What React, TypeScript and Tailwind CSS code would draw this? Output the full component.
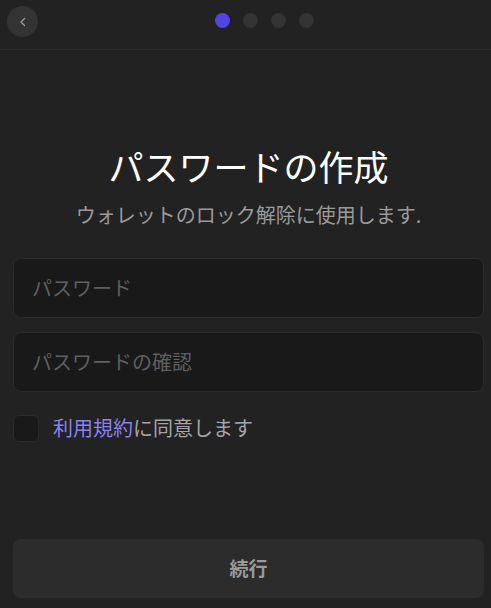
import React from "react";

export default function App() {
  return (
    <div
      className="w-[491px] h-[608px] bg-[#222222] flex flex-col overflow-hidden"
      style={{ fontFamily: '"Noto Sans CJK JP", "Noto Sans", sans-serif' }}
    >
      <header className="h-[50px] shrink-0 relative flex items-center justify-center border-b border-[#2c2c2c]">
        <button className="absolute left-[7px] top-[6px] w-[31px] h-[31px] rounded-full bg-[#333333] flex items-center justify-center text-[#9a9a9a]">
          <svg width="12" height="12" viewBox="0 0 24 24" fill="none" stroke="currentColor" strokeWidth="2.5" strokeLinecap="round" strokeLinejoin="round">
            <path d="M15 5l-7 7 7 7" />
          </svg>
        </button>
        <div className="flex items-center gap-[13px] -mt-[8px] ml-[37px]">
          <span className="w-[15px] h-[15px] rounded-full bg-[#5046e4]" />
          <span className="w-[15px] h-[15px] rounded-full bg-[#333333]" />
          <span className="w-[15px] h-[15px] rounded-full bg-[#333333]" />
          <span className="w-[15px] h-[15px] rounded-full bg-[#333333]" />
        </div>
      </header>

      <main className="flex-1 flex flex-col pl-[13px] pr-[7px]">
        <h1 className="mt-[94px] text-center text-[35px] leading-[44px] text-white">パスワードの作成</h1>
        <p className="mt-[13px] text-center text-[20px] leading-[28px] text-[#9a9a9a]">
          ウォレットのロック解除に使用します.
        </p>

        <div className="mt-[29px] h-[60px] rounded-[8px] bg-[#191919] border border-[#2b2b2b] flex items-center px-[18px]">
          <span className="text-[20px] text-[#5f5f5f]">パスワード</span>
        </div>
        <div className="mt-[14px] h-[60px] rounded-[8px] bg-[#191919] border border-[#2b2b2b] flex items-center px-[18px]">
          <span className="text-[20px] text-[#5f5f5f]">パスワードの確認</span>
        </div>

        <div className="mt-[21px] flex items-center gap-[14px]">
          <span className="w-[26px] h-[27px] rounded-[6px] bg-[#191919] border border-[#2b2b2b]" />
          <span className="text-[20px] text-[#a5a5a5]">
            <span className="text-[#8a80f2]">利用規約</span>に同意します
          </span>
        </div>

        <div className="flex-1" />

        <button className="mb-[10px] h-[59px] rounded-[8px] bg-[#2c2c2c] text-[19px] font-bold text-[#9a9a9a]">
          続行
        </button>
      </main>
    </div>
  );
}
